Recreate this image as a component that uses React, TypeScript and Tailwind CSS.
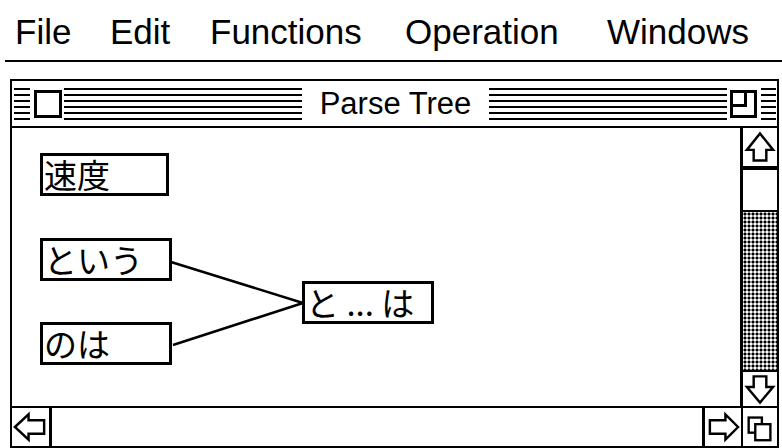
import React from 'react';

// menu titles with the width each one takes in the bar
const menuItems = [
  { label: 'File', w: 'w-[95px]' },
  { label: 'Edit', w: 'w-[100px]' },
  { label: 'Functions', w: 'w-[195px]' },
  { label: 'Operation', w: 'w-[202px]' },
  { label: 'Windows', w: '' },
];

interface TreeNode {
  id: string;
  label: string;
  x: number;
  y: number;
  w: number;
}

// positions on the canvas, relative to the content area
const nodes: TreeNode[] = [
  { id: 'sokudo', label: '速度', x: 28, y: 25, w: 129 },
  { id: 'toiu', label: 'という', x: 28, y: 110, w: 132 },
  { id: 'noha', label: 'のは', x: 28, y: 194, w: 132 },
  { id: 'towa', label: 'と ... は', x: 290, y: 153, w: 132 },
];

const Stripes: React.FC<{ className?: string }> = ({ className = '' }) => (
  <div className={`flex flex-col gap-[4px] ${className}`}>
    {[0, 1, 2, 3, 4, 5].map((i) => (
      <div key={i} className="h-[2px] bg-black" />
    ))}
  </div>
);

const ArrowUp = () => (
  <svg width="35" height="37" viewBox="0 0 35 37">
    <path d="M17.5 5 L31 22 L24 22 L24 33 L11 33 L11 22 L4 22 Z" fill="white" stroke="black" strokeWidth="2.5" />
  </svg>
);

const ArrowDown = () => (
  <svg width="35" height="34" viewBox="0 0 35 34">
    <path d="M17.5 31 L31 15 L24 15 L24 4 L11 4 L11 15 L4 15 Z" fill="white" stroke="black" strokeWidth="2.5" />
  </svg>
);

const ArrowLeft = () => (
  <svg width="38" height="38" viewBox="0 0 38 38">
    <path d="M3 19 L17 6 L17 12 L33 12 L33 26 L17 26 L17 32 Z" fill="white" stroke="black" strokeWidth="2.5" />
  </svg>
);

const ArrowRight = () => (
  <svg width="37" height="38" viewBox="0 0 37 38">
    <path d="M34 19 L21 6 L21 12 L5 12 L5 26 L21 26 L21 32 Z" fill="white" stroke="black" strokeWidth="2.5" />
  </svg>
);

const SizeBox = () => (
  <svg width="36" height="38" viewBox="0 0 36 38">
    <rect x="6" y="9" width="14" height="16" fill="white" stroke="black" strokeWidth="2.5" />
    <rect x="13" y="16" width="16" height="17" fill="white" stroke="black" strokeWidth="2.5" />
  </svg>
);

export default function App() {
  return (
    <div className="w-[782px] h-[448px] bg-white overflow-hidden text-black font-['Liberation_Sans',sans-serif]">
      {/* Menu bar */}
      <div className="h-[60px] pt-[14px] pl-[15px] flex items-start text-[35px] leading-none">
        {menuItems.map((m) => (
          <span key={m.label} className={`shrink-0 ${m.w}`}>
            {m.label}
          </span>
        ))}
      </div>
      <div className="ml-[5px] h-[2px] bg-black" />

      {/* Window */}
      <div className="mt-[17px] ml-[10px] w-[769px] h-[369px] border-2 border-black flex flex-col">
        {/* Title bar */}
        <div className="h-[47px] border-b-2 border-black flex items-center pl-[2px] pr-[1px]">
          <Stripes className="w-[16px]" />
          <div className="ml-[4px] w-[28px] h-[28px] border-[3px] border-black bg-white" />
          <Stripes className="ml-[2px] flex-1" />
          <span className="px-[18px] text-[31px] leading-none">Parse Tree</span>
          <Stripes className="flex-1" />
          <div className="ml-[3px] relative w-[27px] h-[28px] border-[3px] border-black bg-white">
            <div className="absolute left-0 top-0 w-[14px] h-[14px] border-r-[3px] border-b-[3px] border-black" />
          </div>
          <Stripes className="ml-[4px] w-[15px]" />
        </div>

        {/* Body */}
        <div className="flex-1 flex min-h-0">
          <div className="relative flex-1 bg-white font-['Noto_Sans_CJK_JP',sans-serif]">
            <svg className="absolute inset-0" width="728" height="278">
              <line x1="159" y1="134" x2="291" y2="175" stroke="black" strokeWidth="2.5" />
              <line x1="161" y1="217" x2="291" y2="175" stroke="black" strokeWidth="2.5" />
            </svg>
            {nodes.map((n) => (
              <div
                key={n.id}
                className="absolute h-[43px] border-[3px] border-black bg-white flex items-center pl-[1px] text-[33px] leading-none"
                style={{ left: n.x, top: n.y, width: n.w }}
              >
                {n.label}
              </div>
            ))}
          </div>

          {/* Vertical scroll bar */}
          <div className="w-[37px] border-l-[3px] border-black flex flex-col">
            <div className="h-[40px] border-b-2 border-black flex items-start justify-center">
              <ArrowUp />
            </div>
            <div className="h-[44px] border-y-2 border-black bg-white" />
            <div className="flex-1 bg-[radial-gradient(circle,#000_1.3px,transparent_1.8px)] bg-[length:4px_4px]" />
            <div className="h-[36px] border-t-2 border-black flex items-end justify-center">
              <ArrowDown />
            </div>
          </div>
        </div>

        {/* Horizontal scroll bar */}
        <div className="h-[40px] border-t-2 border-black flex">
          <div className="w-[40px] border-r-[3px] border-black flex items-center">
            <ArrowLeft />
          </div>
          <div className="flex-1 bg-white" />
          <div className="w-[39px] border-l-[3px] border-black flex items-center">
            <ArrowRight />
          </div>
          <div className="w-[36px] border-l-2 border-black flex items-center">
            <SizeBox />
          </div>
        </div>
      </div>
    </div>
  );
}
